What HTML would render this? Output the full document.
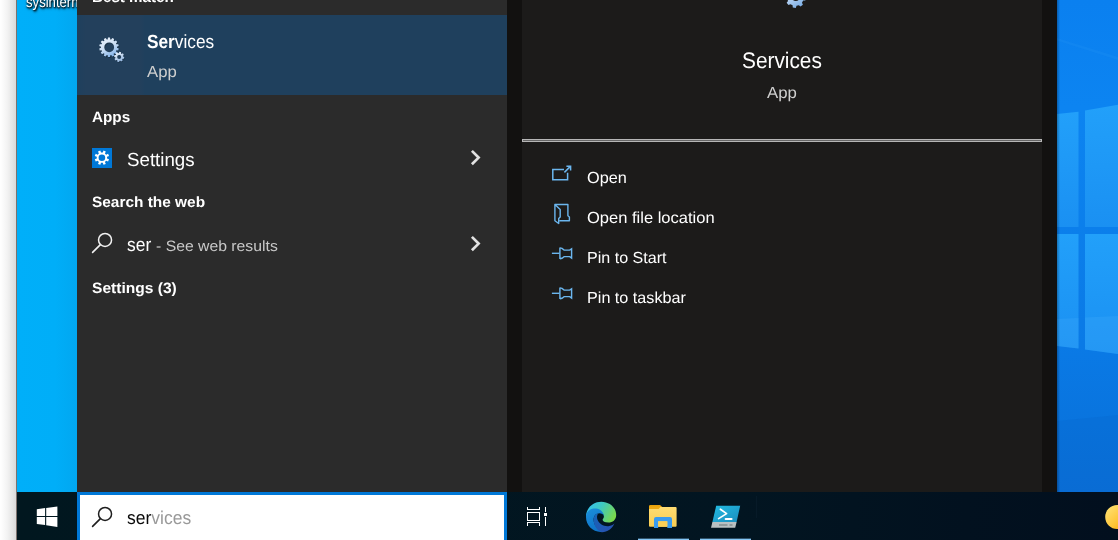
<!DOCTYPE html>
<html lang="en">
<head>
<meta charset="utf-8">
<title>Search - Services</title>
<style>
*{box-sizing:border-box;margin:0;padding:0}
html,body{width:1118px;height:540px;overflow:hidden;background:#fff}
body{position:relative;font-family:"Liberation Sans",sans-serif;color:#fff;text-rendering:geometricPrecision}
#root{position:absolute;left:0;top:0;width:1118px;height:540px;overflow:hidden;transform:translateZ(0);will-change:transform}
.abs{position:absolute}
.t{position:absolute;white-space:nowrap;line-height:1;transform-origin:0 0;display:inline-block}
b{font-weight:bold}
#edge{left:0;top:0;width:17px;height:540px;background:linear-gradient(90deg,#ffffff 0,#fcfcfc 2px,#f3f3f3 7px,#e6e6e6 12px,#dadada 16px,#7d726e 16px,#7d726e 17px)}
#desk{left:17px;top:0;width:60px;height:492px;background:linear-gradient(90deg,#00aff9 0,#00aef8 38px,#02a7f0 60px)}
#lp{left:77px;top:0;width:430px;height:492px;background:#2b2b2b}
#sel{left:77px;top:15px;width:430px;height:80px;background:#1f405d}
#gap1{left:507px;top:0;width:15px;height:492px;background:#121110}
#rp{left:522px;top:0;width:520px;height:492px;background:#1c1b1a}
#gap2{left:1042px;top:0;width:15px;height:492px;background:#121110}
#wall{left:1057px;top:0;width:61px;height:492px}
#hr{left:522px;top:139px;width:520px;height:3px;background:#666;border:1px solid #b6b6b6}
#tb{left:17px;top:492px;width:1101px;height:48px;background:linear-gradient(90deg,#01171f 0,#021521 720px,#02111f 950px,#020f1e 1101px)}
#sb{left:77px;top:492px;width:430px;height:48px;background:#fff;border:3px solid #0078d7;border-bottom:0}
.ind{position:absolute;top:538px;height:2px;background:linear-gradient(180deg,rgba(134,199,246,.35) 0,rgba(134,199,246,.35) 1px,#86c7f6 1px,#86c7f6 2px)}
</style>
</head>
<body>
<div id="root">
<div id="edge" class="abs"></div>
<div id="desk" class="abs" style="overflow:hidden"><div class="t" style="left:8.5px;top:-5px;font-size:15px;color:#fff;transform:scaleX(0.875);text-shadow:1px 1px 2px #000,0 1px 2px rgba(0,0,0,.8),1px 2px 3px rgba(0,0,0,.6)">sysintern</div></div>
<div id="lp" class="abs"></div>
<div id="sel" class="abs"></div>
<div class="abs" style="left:80px;top:15px;width:64px;height:80px;background:linear-gradient(90deg,#20405d 0,#23405c 6px,#23405c 60px,#20405d 64px)"></div>
<div id="gap1" class="abs"></div>
<div id="rp" class="abs"></div>
<div id="gap2" class="abs"></div>
<svg id="wall" class="abs" width="61" height="492" viewBox="0 0 61 492">
<defs>
<linearGradient id="wbg" x1="0" y1="0" x2="0" y2="1"><stop offset="0" stop-color="#0a80f0"/><stop offset="0.22" stop-color="#0c84f1"/><stop offset="0.7" stop-color="#0a7ae6"/><stop offset="0.86" stop-color="#0974de"/><stop offset="1" stop-color="#0a70d8"/></linearGradient>
<linearGradient id="wpn" x1="0" y1="0" x2="0" y2="1"><stop offset="0" stop-color="#22a0fa"/><stop offset="0.5" stop-color="#1e98f6"/><stop offset="1" stop-color="#1a90f2"/></linearGradient>
<linearGradient id="wsh" x1="0" y1="0" x2="1" y2="0"><stop offset="0" stop-color="#000" stop-opacity="0.28"/><stop offset="1" stop-color="#000" stop-opacity="0"/></linearGradient>
</defs>
<rect width="61" height="492" fill="url(#wbg)"/>
<path d="M0 38 L61 57 V60 L0 40.5Z" fill="#2a96f6" opacity="0.2"/>
<path d="M0 114 L21.5 111.8 V227 H0Z" fill="url(#wpn)"/>
<path d="M28 110.6 L61 104.8 V227 H28Z" fill="url(#wpn)"/>
<path d="M0 234 H21.5 V348.5 L0 346Z" fill="url(#wpn)"/>
<path d="M28 234 H61 V354 L28 349.5Z" fill="url(#wpn)"/>
<path d="M0 319 L21.5 318 V348.5 L0 346Z M28 317.6 L61 316 V354 L28 349.5Z" fill="#3aa6fa" opacity="0.35"/>
<path d="M0 421 L61 415 V492 H0Z" fill="#0660c4" opacity="0.18"/>
<rect width="3" height="492" fill="url(#wsh)"/>
</svg>
<div id="hr" class="abs"></div>
<div id="tb" class="abs"></div>
<div id="sb" class="abs"></div>
<!--TEXT-->
<div class="t" id="bm" style="left:91.89px;top:-10px;font-size:15px;color:#fff;transform:scaleX(1.0114)"><b>Best match</b></div>
<div class="t" id="sv1" style="left:147.15px;top:33px;font-size:19px;color:#fff;transform:scaleX(0.9086)"><b>Ser</b>vices</div>
<div class="t" id="app1" style="left:147.20px;top:65px;font-size:16px;color:#cfcfcf;transform:scaleX(1.0450)">App</div>
<div class="t" id="apps" style="left:91.79px;top:110px;font-size:15px;color:#fff;transform:scaleX(1.0164)"><b>Apps</b></div>
<div class="t" id="set" style="left:126.51px;top:151px;font-size:19px;color:#fff;transform:scaleX(0.9851)">Settings</div>
<div class="t" id="stw" style="left:91.79px;top:195px;font-size:15px;color:#fff;transform:scaleX(1.0275)"><b>Search the web</b></div>
<div class="t" id="ser" style="left:127.14px;top:236px;font-size:19px;color:#fff;transform:scaleX(0.9176)">ser</div>
<div class="t" id="swr" style="left:156.11px;top:239px;font-size:15px;color:#c8c8c8;transform:scaleX(1.0507)">- See web results</div>
<div class="t" id="s3" style="left:91.78px;top:281px;font-size:15px;color:#fff;transform:scaleX(1.0373)"><b>Settings (3)</b></div>
<div class="t" id="sv2" style="left:742.07px;top:50px;font-size:22.5px;color:#fff;transform:scaleX(0.9254)">Services</div>
<div class="t" id="app2" style="left:767.20px;top:86px;font-size:16px;color:#cfcfcf;transform:scaleX(1.0486)">App</div>
<div class="t" id="open" style="left:586.94px;top:171px;font-size:16px;color:#fff;transform:scaleX(1.0174)">Open</div>
<div class="t" id="ofl" style="left:586.93px;top:211px;font-size:16px;color:#fff;transform:scaleX(1.0324)">Open file location</div>
<div class="t" id="pts" style="left:586.84px;top:251px;font-size:16px;color:#fff;transform:scaleX(1.0045)">Pin to Start</div>
<div class="t" id="ptt" style="left:586.84px;top:291px;font-size:16px;color:#fff;transform:scaleX(1.0109)">Pin to taskbar</div>
<div class="t" id="q" style="left:126.93px;top:509px;font-size:18.5px;color:#000;transform:scaleX(0.9453)"><span style="color:#0a0a0a">ser</span><span style="color:#999999">vices</span></div>
<!--/TEXT-->
<div class="ind" style="left:638px;width:51px"></div>
<div class="ind" style="left:700px;width:51px"></div>
<!--ICONS-->
<svg class="abs" style="left:96px;top:34px" width="32" height="32" viewBox="0 0 32 32">
<defs><linearGradient id="gg1" x1="0.2" y1="0" x2="0.7" y2="1"><stop offset="0" stop-color="#eaf1f9"/><stop offset="0.5" stop-color="#cadef4"/><stop offset="1" stop-color="#7fb0e8"/></linearGradient>
<linearGradient id="gg2" x1="0.2" y1="0" x2="0.7" y2="1"><stop offset="0" stop-color="#f0f5fb"/><stop offset="1" stop-color="#8fb4e0"/></linearGradient></defs>
<path d="M11.68 5.41 L11.99 3.55 L14.01 3.55 L14.32 5.41 L15.23 5.62 L16.32 4.08 L18.14 4.96 L17.61 6.77 L18.34 7.35 L19.99 6.43 L21.25 8.01 L19.99 9.41 L20.40 10.26 L22.28 10.15 L22.73 12.12 L20.99 12.83 L20.99 13.77 L22.73 14.48 L22.28 16.45 L20.40 16.34 L19.99 17.19 L21.25 18.59 L19.99 20.17 L18.34 19.25 L17.61 19.83 L18.14 21.64 L16.32 22.52 L15.23 20.98 L14.32 21.19 L14.01 23.05 L11.99 23.05 L11.68 21.19 L10.77 20.98 L9.68 22.52 L7.86 21.64 L8.39 19.83 L7.66 19.25 L6.01 20.17 L4.75 18.59 L6.01 17.19 L5.60 16.34 L3.72 16.45 L3.27 14.48 L5.01 13.77 L5.01 12.83 L3.27 12.12 L3.72 10.15 L5.60 10.26 L6.01 9.41 L4.75 8.01 L6.01 6.43 L7.66 7.35 L8.39 6.77 L7.86 4.96 L9.68 4.08 L10.77 5.62ZM8.30 13.30 a4.90 4.90 0 1 0 9.80 0 a4.90 4.90 0 1 0 -9.80 0Z" fill="#10202f" fill-rule="evenodd" opacity="0.55" transform="translate(0.7,0.9)"/>
<path d="M11.68 5.41 L11.99 3.55 L14.01 3.55 L14.32 5.41 L15.23 5.62 L16.32 4.08 L18.14 4.96 L17.61 6.77 L18.34 7.35 L19.99 6.43 L21.25 8.01 L19.99 9.41 L20.40 10.26 L22.28 10.15 L22.73 12.12 L20.99 12.83 L20.99 13.77 L22.73 14.48 L22.28 16.45 L20.40 16.34 L19.99 17.19 L21.25 18.59 L19.99 20.17 L18.34 19.25 L17.61 19.83 L18.14 21.64 L16.32 22.52 L15.23 20.98 L14.32 21.19 L14.01 23.05 L11.99 23.05 L11.68 21.19 L10.77 20.98 L9.68 22.52 L7.86 21.64 L8.39 19.83 L7.66 19.25 L6.01 20.17 L4.75 18.59 L6.01 17.19 L5.60 16.34 L3.72 16.45 L3.27 14.48 L5.01 13.77 L5.01 12.83 L3.27 12.12 L3.72 10.15 L5.60 10.26 L6.01 9.41 L4.75 8.01 L6.01 6.43 L7.66 7.35 L8.39 6.77 L7.86 4.96 L9.68 4.08 L10.77 5.62ZM8.30 13.30 a4.90 4.90 0 1 0 9.80 0 a4.90 4.90 0 1 0 -9.80 0Z" fill="url(#gg1)" fill-rule="evenodd"/>
<path d="M22.85 19.02 L23.30 17.80 L25.09 18.17 L25.04 19.46 L25.70 19.90 L26.88 19.36 L27.89 20.89 L26.93 21.77 L27.08 22.55 L28.30 23.00 L27.93 24.79 L26.64 24.74 L26.20 25.40 L26.74 26.58 L25.21 27.59 L24.33 26.63 L23.55 26.78 L23.10 28.00 L21.31 27.63 L21.36 26.34 L20.70 25.90 L19.52 26.44 L18.51 24.91 L19.47 24.03 L19.32 23.25 L18.10 22.80 L18.47 21.01 L19.76 21.06 L20.20 20.40 L19.66 19.22 L21.19 18.21 L22.07 19.17ZM21.20 22.90 a2.00 2.00 0 1 0 4.00 0 a2.00 2.00 0 1 0 -4.00 0Z" fill="#10202f" fill-rule="evenodd" opacity="0.55" transform="translate(0.5,0.7)"/>
<path d="M22.85 19.02 L23.30 17.80 L25.09 18.17 L25.04 19.46 L25.70 19.90 L26.88 19.36 L27.89 20.89 L26.93 21.77 L27.08 22.55 L28.30 23.00 L27.93 24.79 L26.64 24.74 L26.20 25.40 L26.74 26.58 L25.21 27.59 L24.33 26.63 L23.55 26.78 L23.10 28.00 L21.31 27.63 L21.36 26.34 L20.70 25.90 L19.52 26.44 L18.51 24.91 L19.47 24.03 L19.32 23.25 L18.10 22.80 L18.47 21.01 L19.76 21.06 L20.20 20.40 L19.66 19.22 L21.19 18.21 L22.07 19.17ZM21.20 22.90 a2.00 2.00 0 1 0 4.00 0 a2.00 2.00 0 1 0 -4.00 0Z" fill="url(#gg2)" fill-rule="evenodd"/>
</svg>
<svg class="abs" style="left:780px;top:0px" width="32" height="12" viewBox="0 0 32 12">
<defs><linearGradient id="gg3" x1="0" y1="0" x2="0.6" y2="1"><stop offset="0" stop-color="#eef4fb"/><stop offset="1" stop-color="#7fb0e6"/></linearGradient></defs>
<path d="M16.51 5.84 L15.80 7.90 L12.79 7.53 L12.58 5.36 L10.46 4.17 L8.50 5.12 L6.63 2.73 L8.02 1.06 L7.36 -1.29 L5.30 -2.00 L5.67 -5.01 L7.84 -5.22 L9.03 -7.34 L8.08 -9.30 L10.47 -11.17 L12.14 -9.78 L14.49 -10.44 L15.20 -12.50 L18.21 -12.13 L18.42 -9.96 L20.54 -8.77 L22.50 -9.72 L24.37 -7.33 L22.98 -5.66 L23.64 -3.31 L25.70 -2.60 L25.33 0.41 L23.16 0.62 L21.97 2.74 L22.92 4.70 L20.53 6.57 L18.86 5.18ZM12.20 -2.60 a3.60 3.60 0 1 0 7.20 0 a3.60 3.60 0 1 0 -7.20 0Z" fill="url(#gg3)" fill-rule="evenodd"/>
</svg>
<svg class="abs" style="left:92px;top:148px" width="20" height="20" viewBox="0 0 20 20"><rect width="20" height="20" fill="#0078d7"/><path d="M15.03 10.53 L17.02 11.32 L16.08 13.59 L14.12 12.74 L12.94 13.92 L13.79 15.88 L11.52 16.82 L10.73 14.83 L9.07 14.83 L8.28 16.82 L6.01 15.88 L6.86 13.92 L5.68 12.74 L3.72 13.59 L2.78 11.32 L4.77 10.53 L4.77 8.87 L2.78 8.08 L3.72 5.81 L5.68 6.66 L6.86 5.48 L6.01 3.52 L8.28 2.58 L9.07 4.57 L10.73 4.57 L11.52 2.58 L13.79 3.52 L12.94 5.48 L14.12 6.66 L16.08 5.81 L17.02 8.08 L15.03 8.87ZM6.60 9.70 a3.30 3.30 0 1 0 6.60 0 a3.30 3.30 0 1 0 -6.60 0Z" fill="#fff" fill-rule="evenodd"/></svg>
<!-- chevrons -->
<svg class="abs" style="left:466px;top:146px" width="20" height="24" viewBox="0 0 20 24"><path d="M5.9 4.9 L12.6 11.6 L5.9 18.3" fill="none" stroke="#e2e2e2" stroke-width="2.7"/></svg>
<svg class="abs" style="left:466px;top:232px" width="20" height="24" viewBox="0 0 20 24"><path d="M5.9 4.9 L12.6 11.6 L5.9 18.3" fill="none" stroke="#e2e2e2" stroke-width="2.7"/></svg>
<!-- magnifier (web row) -->
<svg class="abs" style="left:88px;top:228px" width="30" height="30" viewBox="0 0 30 30"><circle cx="17.05" cy="11.95" r="6.5" fill="none" stroke="#f2f2f2" stroke-width="1.5"/><path d="M12.4 16.6 L4.6 24.4" stroke="#f2f2f2" stroke-width="1.6" stroke-linecap="round"/></svg>
<!-- open -->
<svg class="abs" style="left:546px;top:160px" width="32" height="32" viewBox="0 0 32 32" fill="none" stroke="#6bb6ee" stroke-width="1.5"><path d="M18 9.5 H6.8 V19.85 H21.6 V12.7"/><path d="M18.4 12.4 L24.4 6.4"/><path d="M20.4 6.2 H24.6 V10.6"/></svg>
<!-- open file location -->
<svg class="abs" style="left:546px;top:198px" width="32" height="32" viewBox="0 0 32 32" fill="none" stroke="#6bb6ee" stroke-width="1.4" stroke-linejoin="round"><path d="M8.9 6.5 H21.9 V17.8 L23.4 19 V22.8 H13.2"/><path d="M8.9 6.5 L14.2 11.6 V19 L12.7 20.4 V25.5 L8.9 22.8 Z"/></svg>
<!-- pin 1 -->
<svg class="abs" style="left:546px;top:238px" width="32" height="32" viewBox="0 0 32 32" fill="none" stroke="#6bb6ee" stroke-width="1.4"><path d="M5.9 15.3 H13.6"/><path d="M13.9 9.6 V21 M13.9 9.8 L16 10.4 L18.1 12.1 H23.7 L25.6 10.8 V20.1 L23.7 18.6 H18.1 L16 20.3 L13.9 20.7"/></svg>
<!-- pin 2 -->
<svg class="abs" style="left:546px;top:278px" width="32" height="32" viewBox="0 0 32 32" fill="none" stroke="#6bb6ee" stroke-width="1.4"><path d="M5.9 15.3 H13.6"/><path d="M13.9 9.6 V21 M13.9 9.8 L16 10.4 L18.1 12.1 H23.7 L25.6 10.8 V20.1 L23.7 18.6 H18.1 L16 20.3 L13.9 20.7"/></svg>

<!-- start logo -->
<svg class="abs" style="left:34px;top:504px" width="26" height="26" viewBox="0 0 26 26" fill="#fff"><path d="M2.8 5.3 L11.1 4.1 V12 H2.8Z"/><path d="M12.2 3.95 L23.4 2.4 V12 H12.2Z"/><path d="M2.8 13.1 H11.1 V21.1 L2.8 19.9Z"/><path d="M12.2 13.1 H23.4 V22.9 L12.2 21.3Z"/></svg>
<!-- magnifier (search box) -->
<svg class="abs" style="left:88px;top:501.75px" width="30" height="30" viewBox="0 0 30 30"><circle cx="17.05" cy="11.95" r="6.5" fill="none" stroke="#1e1e1e" stroke-width="1.5"/><path d="M12.4 16.6 L4.6 24.4" stroke="#1e1e1e" stroke-width="1.6" stroke-linecap="round"/></svg>
<!-- task view -->
<svg class="abs" style="left:524px;top:504px" width="26" height="26" viewBox="0 0 26 26" fill="#fff" shape-rendering="crispEdges"><rect x="3" y="8" width="13" height="1"/><rect x="3" y="16" width="13" height="1"/><rect x="3" y="8" width="1" height="9"/><rect x="15" y="8" width="1" height="9"/><rect x="3" y="5" width="13" height="1"/><rect x="3" y="3" width="1" height="3"/><rect x="15" y="3" width="1" height="3"/><rect x="3" y="18" width="13" height="1"/><rect x="3" y="18" width="1" height="4"/><rect x="15" y="18" width="1" height="4"/><rect x="21" y="3" width="1" height="5"/><rect x="21" y="13" width="1" height="9"/><rect x="20" y="9" width="3" height="3"/></svg>
<!-- edge -->
<svg class="abs" style="left:584px;top:500px" width="34" height="34" viewBox="0 0 34 34">
<defs>
<linearGradient id="eg1" x1="0" y1="0.2" x2="1" y2="0.6"><stop offset="0" stop-color="#35c1f1"/><stop offset="0.45" stop-color="#3fc9c0"/><stop offset="1" stop-color="#7bd84a"/></linearGradient>
<linearGradient id="eg2" x1="0" y1="0" x2="0.4" y2="1"><stop offset="0" stop-color="#1b8fdc"/><stop offset="1" stop-color="#0e74c8"/></linearGradient>
<linearGradient id="eg3" x1="0" y1="0" x2="1" y2="1"><stop offset="0" stop-color="#1565b8"/><stop offset="1" stop-color="#2a4fb0"/></linearGradient>
</defs>
<path d="M2 17 C2 8 9 1.7 17.3 1.7 C26 1.7 32.2 8 32.2 15 C32.2 20 28.5 22.6 24.5 22.6 C20.5 22.6 18.6 21.2 18.6 19.8 C18.6 18.9 19.9 18.6 19.9 16.5 C19.9 14 17.6 11.6 14 11.6 C8.6 11.6 3.5 15 2 17Z" fill="url(#eg1)"/>
<path d="M2 17 C2 12 6 8.6 11 8.6 C16 8.6 19.9 12 19.9 16.5 C19.9 14.4 17.4 13.2 15.4 13.2 C12 13.2 9.6 16 9.6 19.6 C9.6 25 13.5 30.4 20 31.6 C10 33.6 2 26 2 17Z" fill="url(#eg2)"/>
<path d="M9.6 19.6 C9.6 16 12 13.2 14.6 13.2 C12.8 14.6 12.6 17.6 13.6 20 C15.3 24 19.6 26.6 24.4 26.2 C27 26 29 25 30.4 23.6 C28.4 28.8 23 32.4 17.6 32.2 C12.6 30.6 9.6 25 9.6 19.6Z" fill="url(#eg3)"/>
</svg>
<!-- folder -->
<svg class="abs" style="left:646px;top:502px" width="34" height="30" viewBox="0 0 34 30">
<defs><linearGradient id="fg" x1="0" y1="0" x2="0" y2="1"><stop offset="0" stop-color="#ffdc72"/><stop offset="1" stop-color="#f9cd52"/></linearGradient></defs>
<path d="M3 4.2 Q3 2.9 4.4 2.9 H14 L16.3 5 H3Z" fill="#e9a20c"/>
<path d="M3 5 H14.6 L16.4 4.9 H29.6 Q30.6 4.9 30.6 5.9 V23.8 Q30.6 24.8 29.6 24.8 H4 Q3 24.8 3 23.8Z" fill="url(#fg)"/>
<path d="M3 4.6 H14.8 L12.6 7 H3Z" fill="#eeaa14"/>
<path d="M8 26 V17 Q8 15 10 15 H24 Q26 15 26 17 V26 H21.3 V19.3 H12.2 V26Z" fill="#3a9bef"/>
<rect x="12.2" y="19.3" width="9.1" height="5.5" fill="#fbcf56"/>
</svg>
<!-- powershell -->
<svg class="abs" style="left:708px;top:502px" width="36" height="30" viewBox="0 0 36 30">
<defs><linearGradient id="pg1" x1="0" y1="0" x2="1" y2="1"><stop offset="0" stop-color="#22bbe2"/><stop offset="1" stop-color="#1b8cbd"/></linearGradient></defs>
<path d="M8.2 3.7 H32.2 L28.6 20 H4.4Z" fill="url(#pg1)"/>
<path d="M4.4 20 H28.6 L27.2 25.8 H3Z" fill="#b9c0c2"/>
<path d="M11 23 H19.5 M21.5 23 H24.5" stroke="#6b7577" stroke-width="1.2"/>
<path d="M12.4 7.2 L18.6 11.6 L10.6 16.6" fill="none" stroke="#fff" stroke-width="1.7" stroke-linejoin="round" stroke-linecap="round"/>
<path d="M17.6 17 H23.6" stroke="#fff" stroke-width="1.9" stroke-linecap="round"/>
</svg>
<!-- weather sun -->
<svg class="abs" style="left:1100px;top:500px" width="18" height="34" viewBox="0 0 18 34"><defs><linearGradient id="sg" x1="0" y1="0" x2="1" y2="1"><stop offset="0" stop-color="#ffe57a"/><stop offset="0.6" stop-color="#ffc436"/><stop offset="1" stop-color="#ff9a08"/></linearGradient></defs><circle cx="17.2" cy="17" r="12" fill="url(#sg)"/></svg>
<div class="abs" style="left:756px;top:496px;width:1px;height:22px;background:#071a28"></div>

<!--/ICONS-->
</div>
</body>
</html>
